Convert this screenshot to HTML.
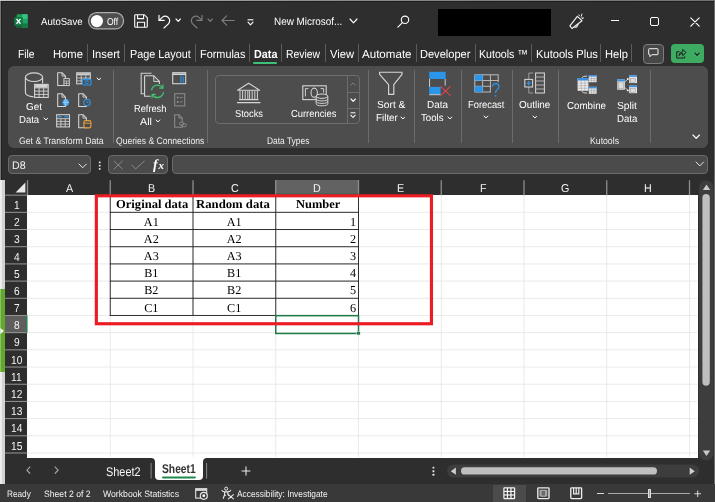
<!DOCTYPE html>
<html><head><meta charset="utf-8"><title>Excel</title>
<style>
html,body{margin:0;padding:0;background:#2e2e2e;}
body{width:715px;height:502px;overflow:hidden;position:relative;font-family:"Liberation Sans",sans-serif;}
#app{will-change:transform;position:absolute;left:0;top:0;width:715px;height:502px;overflow:hidden;background:#2e2e2e;}
.t{position:absolute;white-space:pre;transform-origin:0 0;display:block;text-rendering:geometricPrecision;}
.b{position:absolute;display:block;box-sizing:border-box;}
</style></head><body><div id="app">
<div class="b" style="left:0.00px;top:0.00px;width:715.00px;height:1.00px;background:linear-gradient(90deg,#c4c4c4 0%,#a0a0a0 25%,#8a8a8a 50%,#727272 100%);"></div>
<div class="b" style="left:0.00px;top:1.00px;width:715.00px;height:1.00px;background:#1e1e1e;"></div>
<div class="b" style="left:0.00px;top:1.00px;width:1.00px;height:179.00px;background:#777777;"></div>
<div class="b" style="left:1.00px;top:2.00px;width:1.00px;height:178.00px;background:#1e1e1e;"></div>
<svg class="b" style="left:13.60px;top:13.80px;" width="14" height="14.4" viewBox="0 0 14 14.4">
<rect x="2.6" y="0.2" width="11" height="14" rx="1.3" fill="#1f9d58"/>
<rect x="8.1" y="0.2" width="5.5" height="4.7" fill="#33c481"/>
<rect x="8.1" y="4.9" width="5.5" height="4.6" fill="#21a366"/>
<rect x="8.1" y="9.5" width="5.5" height="4.7" fill="#167a43"/>
<rect x="2.6" y="4.9" width="5.5" height="4.6" fill="#107c41"/>
<rect x="2.6" y="9.5" width="5.5" height="4.7" fill="#185c37"/>
<rect x="0.2" y="2.9" width="8.6" height="8.8" rx="1" fill="#0f7a41"/>
<path d="M2.5 4.9 L6.5 9.8 M6.5 4.9 L2.5 9.8" stroke="#fff" stroke-width="1.35"/>
</svg>
<span class="t" style="left:41.00px;top:18px;font-size:10.2px;line-height:10.2px;color:#fff;font-family:'Liberation Sans', sans-serif;font-weight:400;transform:scaleX(0.9405);">AutoSave</span>
<svg class="b" style="left:86px;top:11px" width="40" height="20" viewBox="0 0 40 20"><rect x="1.90" y="1.00" width="36.30" height="17.60" rx="8.8" fill="#adadad"/></svg>
<svg class="b" style="left:88px;top:12px" width="36" height="18" viewBox="0 0 36 18"><rect x="1.15" y="1.25" width="33.80" height="15.10" rx="7.55" fill="#4e4e4e"/></svg>
<svg class="b" style="left:90.00px;top:14.00px;" width="14" height="14" viewBox="0 0 14 14"><circle cx="6.9" cy="7.1" r="6.1" fill="#ffffff"/></svg>
<span class="t" style="left:106.90px;top:18px;font-size:10.0px;line-height:10.0px;color:#fff;font-family:'Liberation Sans', sans-serif;font-weight:400;transform:scaleX(0.8515);">Off</span>
<svg class="b" style="left:134.00px;top:14.00px;" width="14" height="14" viewBox="0 0 14 14"><path d="M1.6 0.7 H10.3 L13.3 3.7 V12.2 Q13.3 13.3 12.2 13.3 H1.8 Q0.7 13.3 0.7 12.2 V1.6 Q0.7 0.7 1.6 0.7 Z" fill="none" stroke="#fff" stroke-width="1.1"/>
<path d="M3.6 0.9 V4.6 H9.6 V0.9" fill="none" stroke="#fff" stroke-width="1.1"/>
<path d="M3.4 13.2 V8.2 H10.6 V13.2" fill="none" stroke="#fff" stroke-width="1.1"/></svg>
<svg class="b" style="left:157.50px;top:13.50px;" width="13" height="15" viewBox="0 0 13 15"><path d="M1 1.2 V6.4 H6.2" fill="none" stroke="#fff" stroke-width="1.15" stroke-linecap="round" stroke-linejoin="round"/>
<path d="M1.3 6.2 L4.2 3.4 Q7 1 10 3.2 Q13 6 10.6 9.6 L6 14" fill="none" stroke="#fff" stroke-width="1.15" stroke-linecap="round"/></svg>
<svg class="b" style="left:175.10px;top:18.25px;" width="6.4" height="4.3" viewBox="0 0 6.4 4.3"><path d="M1 1 L3.2 3.3 L5.4 1" fill="none" stroke="#fff" stroke-width="1.1" stroke-linecap="round" stroke-linejoin="round"/></svg>
<svg class="b" style="left:189.50px;top:13.50px;" width="13" height="15" viewBox="0 0 13 15"><g transform="translate(13,0) scale(-1,1)"><path d="M1 1.2 V6.4 H6.2" fill="none" stroke="#7d7d7d" stroke-width="1.15" stroke-linecap="round" stroke-linejoin="round"/>
<path d="M1.3 6.2 L4.2 3.4 Q7 1 10 3.2 Q13 6 10.6 9.6 L6 14" fill="none" stroke="#7d7d7d" stroke-width="1.15" stroke-linecap="round"/></g></svg>
<svg class="b" style="left:207.10px;top:18.25px;" width="6.4" height="4.3" viewBox="0 0 6.4 4.3"><path d="M1 1 L3.2 3.3 L5.4 1" fill="none" stroke="#7d7d7d" stroke-width="1.1" stroke-linecap="round" stroke-linejoin="round"/></svg>
<svg class="b" style="left:220.50px;top:15.00px;" width="14" height="11" viewBox="0 0 14 11"><path d="M13.3 5.5 H1 M5.6 0.9 L1 5.5 L5.6 10.1" fill="none" stroke="#7d7d7d" stroke-width="1.15" stroke-linecap="round" stroke-linejoin="round"/></svg>
<svg class="b" style="left:247.00px;top:18.50px;" width="7" height="7" viewBox="0 0 7 7"><path d="M0.6 0.8 H6.4" stroke="#fff" stroke-width="1.1"/><path d="M1 3.2 L3.5 5.8 L6 3.2" fill="none" stroke="#fff" stroke-width="1.1" stroke-linecap="round" stroke-linejoin="round"/></svg>
<span class="t" style="left:274.00px;top:17px;font-size:10.7px;line-height:10.7px;color:#fff;font-family:'Liberation Sans', sans-serif;font-weight:400;transform:scaleX(0.9278);">New Microsof...</span>
<svg class="b" style="left:348.50px;top:18.10px;" width="9" height="5.8" viewBox="0 0 9 5.8"><path d="M1 1 L4.5 4.8 L8 1" fill="none" stroke="#fff" stroke-width="1.15" stroke-linecap="round" stroke-linejoin="round"/></svg>
<svg class="b" style="left:396.50px;top:15.00px;" width="13" height="13" viewBox="0 0 13 13"><circle cx="8" cy="4.8" r="3.7" fill="none" stroke="#fff" stroke-width="1.1"/><path d="M5.4 7.6 L0.9 12.1" stroke="#fff" stroke-width="1.15" stroke-linecap="round"/></svg>
<div class="b" style="left:437.60px;top:9.00px;width:113.40px;height:27.40px;background:#000000;"></div>
<svg class="b" style="left:568.50px;top:12.50px;" width="16" height="17" viewBox="0 0 16 17"><path d="M0.9 12.9 L8.3 3.3 L13 7.7 L3 15.5 Z" fill="none" stroke="#f2f2f2" stroke-width="1.15" stroke-linejoin="round"/>
<path d="M5.4 13.8 Q7.8 15.6 9.2 11" fill="none" stroke="#f2f2f2" stroke-width="1.05"/>
<path d="M9.9 1.9 L10.5 2.9 M12.9 1 L12.3 3.2 M14.6 4.9 L13.3 5.5 M12.2 5.2 L13 4.4" stroke="#f2f2f2" stroke-width="0.95" stroke-linecap="round"/></svg>
<div class="b" style="left:611.00px;top:19.60px;width:8.00px;height:1.10px;background:#ffffff;"></div>
<div class="b" style="left:650.30px;top:17.20px;width:8.60px;height:8.40px;background:transparent;border:1.15px solid #fff;border-radius:2px;"></div>
<svg class="b" style="left:689.50px;top:16.50px;" width="10" height="10" viewBox="0 0 10 10"><path d="M0.8 0.8 L9.2 9.2 M9.2 0.8 L0.8 9.2" stroke="#fff" stroke-width="1.15" stroke-linecap="round"/></svg>
<span class="t" style="left:18.40px;top:49px;font-size:11.7px;line-height:11.7px;color:#fff;font-family:'Liberation Sans', sans-serif;font-weight:400;transform:scaleX(0.8805);">File</span>
<span class="t" style="left:53.00px;top:49px;font-size:11.7px;line-height:11.7px;color:#fff;font-family:'Liberation Sans', sans-serif;font-weight:400;transform:scaleX(0.9612);">Home</span>
<span class="t" style="left:92.00px;top:49px;font-size:11.7px;line-height:11.7px;color:#fff;font-family:'Liberation Sans', sans-serif;font-weight:400;transform:scaleX(0.9569);">Insert</span>
<span class="t" style="left:129.60px;top:49px;font-size:11.7px;line-height:11.7px;color:#fff;font-family:'Liberation Sans', sans-serif;font-weight:400;transform:scaleX(0.9253);">Page Layout</span>
<span class="t" style="left:199.60px;top:49px;font-size:11.7px;line-height:11.7px;color:#fff;font-family:'Liberation Sans', sans-serif;font-weight:400;transform:scaleX(0.9311);">Formulas</span>
<span class="t" style="left:286.40px;top:49px;font-size:11.7px;line-height:11.7px;color:#fff;font-family:'Liberation Sans', sans-serif;font-weight:400;transform:scaleX(0.8863);">Review</span>
<span class="t" style="left:329.60px;top:49px;font-size:11.7px;line-height:11.7px;color:#fff;font-family:'Liberation Sans', sans-serif;font-weight:400;transform:scaleX(0.9543);">View</span>
<span class="t" style="left:362.40px;top:49px;font-size:11.7px;line-height:11.7px;color:#fff;font-family:'Liberation Sans', sans-serif;font-weight:400;transform:scaleX(0.9904);">Automate</span>
<span class="t" style="left:420.00px;top:49px;font-size:11.7px;line-height:11.7px;color:#fff;font-family:'Liberation Sans', sans-serif;font-weight:400;transform:scaleX(0.9450);">Developer</span>
<span class="t" style="left:479.00px;top:49px;font-size:11.7px;line-height:11.7px;color:#fff;font-family:'Liberation Sans', sans-serif;font-weight:400;transform:scaleX(0.9078);">Kutools ™</span>
<span class="t" style="left:535.60px;top:49px;font-size:11.7px;line-height:11.7px;color:#fff;font-family:'Liberation Sans', sans-serif;font-weight:400;transform:scaleX(0.9533);">Kutools Plus</span>
<span class="t" style="left:604.60px;top:49px;font-size:11.7px;line-height:11.7px;color:#fff;font-family:'Liberation Sans', sans-serif;font-weight:400;transform:scaleX(0.9558);">Help</span>
<span class="t" style="left:253.60px;top:49px;font-size:11.7px;line-height:11.7px;color:#fff;font-family:'Liberation Sans', sans-serif;font-weight:700;transform:scaleX(0.9227);">Data</span>
<div class="b" style="left:253.00px;top:62.00px;width:24.40px;height:2.00px;background:#3fbf78;border-radius:1px;"></div>
<div class="b" style="left:86.90px;top:43.50px;width:1.00px;height:18.50px;background:#5c5c5c;"></div>
<div class="b" style="left:123.90px;top:43.50px;width:1.00px;height:18.50px;background:#5c5c5c;"></div>
<div class="b" style="left:194.50px;top:43.50px;width:1.00px;height:18.50px;background:#5c5c5c;"></div>
<div class="b" style="left:249.10px;top:43.50px;width:1.00px;height:18.50px;background:#5c5c5c;"></div>
<div class="b" style="left:280.50px;top:43.50px;width:1.00px;height:18.50px;background:#5c5c5c;"></div>
<div class="b" style="left:325.10px;top:43.50px;width:1.00px;height:18.50px;background:#5c5c5c;"></div>
<div class="b" style="left:357.50px;top:43.50px;width:1.00px;height:18.50px;background:#5c5c5c;"></div>
<div class="b" style="left:415.50px;top:43.50px;width:1.00px;height:18.50px;background:#5c5c5c;"></div>
<div class="b" style="left:474.50px;top:43.50px;width:1.00px;height:18.50px;background:#5c5c5c;"></div>
<div class="b" style="left:531.10px;top:43.50px;width:1.00px;height:18.50px;background:#5c5c5c;"></div>
<div class="b" style="left:600.10px;top:43.50px;width:1.00px;height:18.50px;background:#5c5c5c;"></div>
<div class="b" style="left:631.10px;top:43.50px;width:1.00px;height:18.50px;background:#5c5c5c;"></div>
<div class="b" style="left:643.00px;top:43.60px;width:21.00px;height:20.00px;background:#474747;border:1px solid #7c7c7c;border-radius:4px;"></div>
<svg class="b" style="left:647.60px;top:48.40px;" width="11" height="10" viewBox="0 0 11 10"><path d="M1.3 0.7 H9.4 Q10 0.7 10 1.3 V6.1 Q10 6.7 9.4 6.7 H3.8 L2 8.7 V6.7 H1.3 Q0.7 6.7 0.7 6.1 V1.3 Q0.7 0.7 1.3 0.7 Z" fill="none" stroke="#f4f4f4" stroke-width="1"/></svg>
<div class="b" style="left:670.80px;top:43.60px;width:33.70px;height:19.60px;background:#3eab62;border-radius:4px;"></div>
<svg class="b" style="left:676.40px;top:47.80px;" width="11.4" height="11" viewBox="0 0 11.4 11"><path d="M3.4 3.8 H1.4 Q0.7 3.8 0.7 4.5 V9.3 Q0.7 10 1.4 10 H8 Q8.7 10 8.7 9.3 V8.4" fill="none" stroke="#1d1d1d" stroke-width="1.05"/>
<path d="M2.9 7.6 Q3.3 4.1 6.8 3.7 V1.4 L10 4.6 L6.8 7.6 V5.5 Q4.4 5.5 2.9 7.6 Z" fill="none" stroke="#1d1d1d" stroke-width="1" stroke-linejoin="round"/></svg>
<svg class="b" style="left:694.40px;top:51.65px;" width="6.2" height="4.3" viewBox="0 0 6.2 4.3"><path d="M1 1 L3.1 3.3 L5.2 1" fill="none" stroke="#1d1d1d" stroke-width="1.1" stroke-linecap="round" stroke-linejoin="round"/></svg>
<div class="b" style="left:7.60px;top:66.00px;width:700.40px;height:82.00px;background:#4d4d4d;border-radius:6px;"></div>
<div class="b" style="left:113.10px;top:70.00px;width:1.00px;height:73.00px;background:#6b6b6b;"></div>
<div class="b" style="left:206.90px;top:70.00px;width:1.00px;height:73.00px;background:#6b6b6b;"></div>
<div class="b" style="left:368.10px;top:70.00px;width:1.00px;height:73.00px;background:#6b6b6b;"></div>
<div class="b" style="left:413.90px;top:70.00px;width:1.00px;height:73.00px;background:#6b6b6b;"></div>
<div class="b" style="left:460.50px;top:70.00px;width:1.00px;height:73.00px;background:#6b6b6b;"></div>
<div class="b" style="left:511.90px;top:70.00px;width:1.00px;height:73.00px;background:#6b6b6b;"></div>
<div class="b" style="left:558.10px;top:70.00px;width:1.00px;height:73.00px;background:#6b6b6b;"></div>
<div class="b" style="left:649.90px;top:70.00px;width:1.00px;height:73.00px;background:#6b6b6b;"></div>
<span class="t" style="left:19.40px;top:137px;font-size:9.6px;line-height:9.6px;color:#f0f0f0;font-family:'Liberation Sans', sans-serif;font-weight:400;transform:scaleX(0.9061);">Get &amp; Transform Data</span>
<span class="t" style="left:116.00px;top:137px;font-size:9.6px;line-height:9.6px;color:#f0f0f0;font-family:'Liberation Sans', sans-serif;font-weight:400;transform:scaleX(0.8955);">Queries &amp; Connections</span>
<span class="t" style="left:266.60px;top:137px;font-size:9.6px;line-height:9.6px;color:#f0f0f0;font-family:'Liberation Sans', sans-serif;font-weight:400;transform:scaleX(0.8763);">Data Types</span>
<span class="t" style="left:590.00px;top:137px;font-size:9.6px;line-height:9.6px;color:#f0f0f0;font-family:'Liberation Sans', sans-serif;font-weight:400;transform:scaleX(0.9056);">Kutools</span>
<span class="t" style="left:26.00px;top:103px;font-size:10.2px;line-height:10.2px;color:#fff;font-family:'Liberation Sans', sans-serif;font-weight:400;transform:scaleX(0.9732);">Get</span>
<span class="t" style="left:19.40px;top:116px;font-size:10.2px;line-height:10.2px;color:#fff;font-family:'Liberation Sans', sans-serif;font-weight:400;transform:scaleX(0.9375);">Data</span>
<svg class="b" style="left:42.50px;top:117.30px;" width="5.8" height="4.0" viewBox="0 0 5.8 4.0"><path d="M1 1 L2.9 3.0 L4.8 1" fill="none" stroke="#fff" stroke-width="1.0" stroke-linecap="round" stroke-linejoin="round"/></svg>
<span class="t" style="left:133.60px;top:105px;font-size:10.2px;line-height:10.2px;color:#fff;font-family:'Liberation Sans', sans-serif;font-weight:400;transform:scaleX(0.9072);">Refresh</span>
<span class="t" style="left:139.60px;top:118px;font-size:10.2px;line-height:10.2px;color:#fff;font-family:'Liberation Sans', sans-serif;font-weight:400;transform:scaleX(1.0497);">All</span>
<svg class="b" style="left:155.10px;top:118.60px;" width="5.8" height="4.0" viewBox="0 0 5.8 4.0"><path d="M1 1 L2.9 3.0 L4.8 1" fill="none" stroke="#fff" stroke-width="1.0" stroke-linecap="round" stroke-linejoin="round"/></svg>
<span class="t" style="left:235.00px;top:110px;font-size:10.2px;line-height:10.2px;color:#fff;font-family:'Liberation Sans', sans-serif;font-weight:400;transform:scaleX(0.9147);">Stocks</span>
<span class="t" style="left:291.00px;top:110px;font-size:10.2px;line-height:10.2px;color:#fff;font-family:'Liberation Sans', sans-serif;font-weight:400;transform:scaleX(0.9205);">Currencies</span>
<span class="t" style="left:376.60px;top:101px;font-size:10.2px;line-height:10.2px;color:#fff;font-family:'Liberation Sans', sans-serif;font-weight:400;transform:scaleX(1.0019);">Sort &amp;</span>
<span class="t" style="left:375.60px;top:114px;font-size:10.2px;line-height:10.2px;color:#fff;font-family:'Liberation Sans', sans-serif;font-weight:400;transform:scaleX(0.9662);">Filter</span>
<svg class="b" style="left:399.60px;top:115.80px;" width="5.8" height="4.0" viewBox="0 0 5.8 4.0"><path d="M1 1 L2.9 3.0 L4.8 1" fill="none" stroke="#fff" stroke-width="1.0" stroke-linecap="round" stroke-linejoin="round"/></svg>
<span class="t" style="left:427.00px;top:101px;font-size:10.2px;line-height:10.2px;color:#fff;font-family:'Liberation Sans', sans-serif;font-weight:400;transform:scaleX(0.9747);">Data</span>
<span class="t" style="left:421.00px;top:114px;font-size:10.2px;line-height:10.2px;color:#fff;font-family:'Liberation Sans', sans-serif;font-weight:400;transform:scaleX(0.9449);">Tools</span>
<svg class="b" style="left:446.90px;top:115.80px;" width="5.8" height="4.0" viewBox="0 0 5.8 4.0"><path d="M1 1 L2.9 3.0 L4.8 1" fill="none" stroke="#fff" stroke-width="1.0" stroke-linecap="round" stroke-linejoin="round"/></svg>
<span class="t" style="left:468.00px;top:101px;font-size:10.2px;line-height:10.2px;color:#fff;font-family:'Liberation Sans', sans-serif;font-weight:400;transform:scaleX(0.9173);">Forecast</span>
<svg class="b" style="left:483.10px;top:115.20px;" width="5.8" height="4.0" viewBox="0 0 5.8 4.0"><path d="M1 1 L2.9 3.0 L4.8 1" fill="none" stroke="#fff" stroke-width="1.0" stroke-linecap="round" stroke-linejoin="round"/></svg>
<span class="t" style="left:519.00px;top:101px;font-size:10.2px;line-height:10.2px;color:#fff;font-family:'Liberation Sans', sans-serif;font-weight:400;transform:scaleX(0.9716);">Outline</span>
<svg class="b" style="left:531.50px;top:115.20px;" width="5.8" height="4.0" viewBox="0 0 5.8 4.0"><path d="M1 1 L2.9 3.0 L4.8 1" fill="none" stroke="#fff" stroke-width="1.0" stroke-linecap="round" stroke-linejoin="round"/></svg>
<span class="t" style="left:567.00px;top:102px;font-size:10.2px;line-height:10.2px;color:#fff;font-family:'Liberation Sans', sans-serif;font-weight:400;transform:scaleX(0.9554);">Combine</span>
<span class="t" style="left:617.00px;top:102px;font-size:10.2px;line-height:10.2px;color:#fff;font-family:'Liberation Sans', sans-serif;font-weight:400;transform:scaleX(1.0079);">Split</span>
<span class="t" style="left:616.60px;top:115px;font-size:10.2px;line-height:10.2px;color:#fff;font-family:'Liberation Sans', sans-serif;font-weight:400;transform:scaleX(0.9468);">Data</span>
<svg class="b" style="left:691.80px;top:134.30px;" width="8.4" height="5.4" viewBox="0 0 8.4 5.4"><path d="M1 1 L4.2 4.4 L7.4 1" fill="none" stroke="#fff" stroke-width="1.15" stroke-linecap="round" stroke-linejoin="round"/></svg>
<div class="b" style="left:215.00px;top:75.00px;width:144.60px;height:49.40px;background:transparent;border:1px solid #6d6d6d;border-radius:4px;"></div>
<div class="b" style="left:347.00px;top:75.50px;width:1.00px;height:48.50px;background:#6d6d6d;"></div>
<div class="b" style="left:347.50px;top:91.60px;width:11.90px;height:1.00px;background:#6d6d6d;"></div>
<div class="b" style="left:347.50px;top:107.60px;width:11.90px;height:1.00px;background:#6d6d6d;"></div>
<svg class="b" style="left:350.20px;top:81.50px;" width="6" height="4" viewBox="0 0 6 4"><path d="M0.7 3.2 L3 0.9 L5.3 3.2" fill="none" stroke="#7f7f7f" stroke-width="1" stroke-linecap="round" stroke-linejoin="round"/></svg>
<svg class="b" style="left:350.00px;top:98.45px;" width="6.4" height="4.3" viewBox="0 0 6.4 4.3"><path d="M1 1 L3.2 3.3 L5.4 1" fill="none" stroke="#fff" stroke-width="1.1" stroke-linecap="round" stroke-linejoin="round"/></svg>
<svg class="b" style="left:350.20px;top:111.50px;" width="6" height="7" viewBox="0 0 6 7"><path d="M0.6 0.8 H5.4" stroke="#fff" stroke-width="1"/><path d="M0.8 3.2 L3 5.5 L5.2 3.2" fill="none" stroke="#fff" stroke-width="1.05" stroke-linecap="round" stroke-linejoin="round"/></svg>
<svg class="b" style="left:24.00px;top:71.00px;" width="26" height="28" viewBox="0 0 26 28">
<ellipse cx="10" cy="6.2" rx="8.6" ry="4.3" fill="none" stroke="#d6d6d6" stroke-width="1.1"/>
<path d="M1.4 6.2 V21.5 Q1.4 25 9.6 25.9 M18.6 6.2 V12.6" fill="none" stroke="#d6d6d6" stroke-width="1.1"/>
<rect x="10.6" y="13.4" width="13.6" height="13" fill="#4d4d4d" stroke="#d6d6d6" stroke-width="1.1"/>
<rect x="11.2" y="14" width="12.4" height="2.6" fill="#d4d4d4"/>
<path d="M10.6 20.1 H24.2 M10.6 23.4 H24.2 M15.1 16.6 V26.4 M19.7 16.6 V26.4" stroke="#d6d6d6" stroke-width="0.9"/>
<path d="M10.6 16.9 H24.2" stroke="#d6d6d6" stroke-width="0.9"/>
</svg>
<svg class="b" style="left:57.40px;top:72.00px;" width="16" height="16" viewBox="0 0 16 16"><path d="M0.7 0.7 H5.00 L8.40 4.10 V13.40 H0.7 Z" fill="none" stroke="#d6d6d6" stroke-width="1.05" stroke-linejoin="round"/>
<path d="M5.00 0.7 V4.1 H8.40" fill="none" stroke="#d6d6d6" stroke-width="0.9"/><rect x="6.9" y="6.6" width="5.4" height="7" fill="#4d4d4d" stroke="#d6d6d6" stroke-width="0.9"/><path d="M6.9 9 H12.3 M6.9 11.3 H12.3 M9.6 9 V13.6" stroke="#d6d6d6" stroke-width="0.7"/></svg>
<svg class="b" style="left:76.20px;top:72.40px;" width="16" height="14" viewBox="0 0 16 14"><rect x="0.7" y="0.8" width="13.6" height="11" fill="none" stroke="#d6d6d6" stroke-width="1.05"/>
<rect x="1.1" y="1.2" width="12.8" height="2.2" fill="#cfcfcf"/>
<path d="M0.7 6 H14.3 M0.7 8.9 H14.3 M5.2 3.4 V11.8 M9.8 3.4 V11.8" stroke="#d6d6d6" stroke-width="0.85"/>
<rect x="6.4" y="7.6" width="8.6" height="5.4" rx="0.9" fill="#4d4d4d" stroke="#2b95ea" stroke-width="1.15"/>
<circle cx="10.7" cy="10.3" r="1.55" fill="none" stroke="#2b95ea" stroke-width="1"/>
<path d="M9.2 7.6 L9.8 6.6 H11.6 L12.2 7.6" fill="none" stroke="#2b95ea" stroke-width="0.9"/></svg>
<svg class="b" style="left:95.50px;top:77.20px;" width="5.8" height="4.0" viewBox="0 0 5.8 4.0"><path d="M1 1 L2.9 3.0 L4.8 1" fill="none" stroke="#fff" stroke-width="1.0" stroke-linecap="round" stroke-linejoin="round"/></svg>
<svg class="b" style="left:57.40px;top:92.80px;" width="16" height="16" viewBox="0 0 16 16"><path d="M0.7 0.7 H5.00 L8.40 4.10 V13.40 H0.7 Z" fill="none" stroke="#d6d6d6" stroke-width="1.05" stroke-linejoin="round"/>
<path d="M5.00 0.7 V4.1 H8.40" fill="none" stroke="#d6d6d6" stroke-width="0.9"/><circle cx="8.8" cy="9.4" r="3.4" fill="#2b95ea"/><path d="M8.8 6.2 V12.6 M5.6 9.4 H12 " stroke="#cfe4f7" stroke-width="0.55"/><ellipse cx="8.8" cy="9.4" rx="1.5" ry="3.1" fill="none" stroke="#cfe4f7" stroke-width="0.5"/></svg>
<svg class="b" style="left:78.20px;top:92.80px;" width="16" height="16" viewBox="0 0 16 16"><path d="M0.7 0.7 H5.00 L8.40 4.10 V13.40 H0.7 Z" fill="none" stroke="#d6d6d6" stroke-width="1.05" stroke-linejoin="round"/>
<path d="M5.00 0.7 V4.1 H8.40" fill="none" stroke="#d6d6d6" stroke-width="0.9"/><circle cx="9" cy="9.4" r="3.2" fill="#4d4d4d" stroke="#2b95ea" stroke-width="1.1"/><path d="M9 7.5 V9.5 H10.7" fill="none" stroke="#2b95ea" stroke-width="0.95"/></svg>
<svg class="b" style="left:55.60px;top:113.60px;" width="15" height="14" viewBox="0 0 15 14"><rect x="0.7" y="0.7" width="12.8" height="12.2" fill="none" stroke="#d6d6d6" stroke-width="1.05"/>
<path d="M0.7 4.7 H13.5 M0.7 7.4 H13.5 M0.7 10.1 H13.5 M4.9 4.7 V12.9 M9.2 4.7 V12.9" stroke="#d6d6d6" stroke-width="0.85"/>
<path d="M2.6 2.7 H5.8 M8.4 2.7 H11.6" stroke="#2b95ea" stroke-width="1.3"/><path d="M3.4 1.5 L2.2 2.7 L3.4 3.9 M10.8 1.5 L12 2.7 L10.8 3.9" fill="none" stroke="#2b95ea" stroke-width="0.8"/></svg>
<svg class="b" style="left:78.20px;top:113.60px;" width="16" height="16" viewBox="0 0 16 16"><path d="M0.7 0.7 H5.00 L8.40 4.10 V13.80 H0.7 Z" fill="none" stroke="#d6d6d6" stroke-width="1.05" stroke-linejoin="round"/>
<path d="M5.00 0.7 V4.1 H8.40" fill="none" stroke="#d6d6d6" stroke-width="0.9"/><rect x="5.9" y="6.6" width="7" height="7.2" rx="1.6" fill="#4d4d4d" stroke="#e5a03c" stroke-width="1.15"/><path d="M5.9 9.2 H12.9" stroke="#e5a03c" stroke-width="0.95"/></svg>
<svg class="b" style="left:140.00px;top:72.00px;" width="24" height="27" viewBox="0 0 24 27"><path d="M4 21.8 H1.2 V1.2 H11.6" fill="none" stroke="#cfcfcf" stroke-width="1.1"/>
<path d="M4.6 3.8 H13.8 L19.4 9.4 V12 M4.6 3.8 V24.2 H10.6" fill="none" stroke="#d6d6d6" stroke-width="1.1" stroke-linejoin="round"/>
<path d="M13.8 3.8 V9.4 H19.4" fill="none" stroke="#d6d6d6" stroke-width="1"/>
<path d="M11.6 18.4 A6 6 0 0 1 22.4 15.6" fill="none" stroke="#3fc36f" stroke-width="1.35"/>
<path d="M23.4 20.2 A6 6 0 0 1 12.6 23" fill="none" stroke="#3fc36f" stroke-width="1.35"/>
<path d="M22.9 12.4 V16.2 H19.2" fill="none" stroke="#3fc36f" stroke-width="1.25" stroke-linejoin="round"/>
<path d="M12.1 26.2 V22.4 H15.8" fill="none" stroke="#3fc36f" stroke-width="1.25" stroke-linejoin="round"/></svg>
<svg class="b" style="left:172.20px;top:72.40px;" width="15" height="13" viewBox="0 0 15 13"><rect x="0.7" y="0.7" width="13" height="11" fill="none" stroke="#d6d6d6" stroke-width="1.1"/><path d="M0.7 2.2 H13.7" stroke="#d6d6d6" stroke-width="1.6"/>
<path d="M8.9 3 V11.4 M11.2 4.2 V10.6" stroke="#2b95ea" stroke-width="1.15"/></svg>
<svg class="b" style="left:173.60px;top:93.00px;" width="12" height="14" viewBox="0 0 12 14"><rect x="0.7" y="0.7" width="10" height="12.2" fill="none" stroke="#8c8c8c" stroke-width="1.05"/>
<rect x="2.8" y="3.6" width="1.8" height="1.8" fill="#8c8c8c"/><rect x="2.8" y="8" width="1.8" height="1.8" fill="#8c8c8c"/><path d="M5.8 4.5 H8.6 M5.8 8.9 H8.6" stroke="#8c8c8c" stroke-width="0.9"/></svg>
<svg class="b" style="left:174.00px;top:114.20px;" width="16" height="16" viewBox="0 0 16 16"><path d="M0.7 0.7 H4.80 L8.20 4.10 V13.20 H0.7 Z" fill="none" stroke="#8c8c8c" stroke-width="1.05" stroke-linejoin="round"/>
<path d="M4.80 0.7 V4.1 H8.20" fill="none" stroke="#8c8c8c" stroke-width="0.9"/><rect x="5.4" y="8.2" width="4.4" height="3" rx="1.5" fill="#4d4d4d" stroke="#8c8c8c" stroke-width="0.9"/><rect x="7.8" y="9.8" width="4.6" height="3" rx="1.5" fill="none" stroke="#8c8c8c" stroke-width="0.9"/></svg>
<svg class="b" style="left:236.00px;top:82.00px;" width="26" height="23" viewBox="0 0 26 23"><path d="M1.6 8.2 L12.6 1.2 L23.6 8.2 Z" fill="none" stroke="#d6d6d6" stroke-width="1.1" stroke-linejoin="round"/>
<path d="M4 9 V17.4 M6.6 9 V17.4 M9.2 9 V17.4 M11.8 9 V17.4 M13.6 9 V17.4 M16.2 9 V17.4 M18.8 9 V17.4 M21.4 9 V17.4" stroke="#d6d6d6" stroke-width="0.95"/>
<path d="M3 17.6 H22.4 M1 20.6 H24.4" stroke="#d6d6d6" stroke-width="1.15"/></svg>
<svg class="b" style="left:301.50px;top:85.00px;" width="27" height="22" viewBox="0 0 27 22"><rect x="0.8" y="0.8" width="23.4" height="13.8" fill="none" stroke="#d6d6d6" stroke-width="1.1"/>
<path d="M3.4 11.4 V3.6 H6.4 M18.6 3.6 H21.6 V7.6" fill="none" stroke="#d6d6d6" stroke-width="0.95"/>
<ellipse cx="12.2" cy="7.7" rx="3.2" ry="4.6" fill="none" stroke="#d6d6d6" stroke-width="1.05"/>
<path d="M14.2 11 V18.6 Q14.2 21 20 21 Q25.8 21 25.8 18.6 V11 Z" fill="#4d4d4d"/>
<ellipse cx="20" cy="11.2" rx="5.8" ry="2.2" fill="#4d4d4d" stroke="#d6d6d6" stroke-width="1"/>
<path d="M14.2 11.2 V18.6 Q14.2 20.8 20 20.8 Q25.8 20.8 25.8 18.6 V11.2 M14.2 13.7 Q14.2 15.9 20 15.9 Q25.8 15.9 25.8 13.7 M14.2 16.2 Q14.2 18.4 20 18.4 Q25.8 18.4 25.8 16.2" fill="none" stroke="#d6d6d6" stroke-width="0.95"/></svg>
<svg class="b" style="left:378.00px;top:71.00px;" width="26" height="25" viewBox="0 0 26 25"><path d="M1.6 1.2 H24 V3.4 L15.8 13.6 V23.4 H10.6 V13.6 L1.6 3.4 Z" fill="none" stroke="#d6d6d6" stroke-width="1.15" stroke-linejoin="round"/></svg>
<svg class="b" style="left:428.00px;top:71.00px;" width="24" height="26" viewBox="0 0 24 26"><rect x="1.2" y="0.8" width="16.4" height="7.2" fill="#2b95ea"/>
<path d="M1.6 8 V16 M17.2 8 V14.6" stroke="#d6d6d6" stroke-width="0.95"/>
<rect x="1.2" y="15.9" width="11.4" height="7.5" fill="#2b95ea"/><path d="M1.2 23.7 H12.6" stroke="#e6e6e6" stroke-width="0.8"/>
<path d="M12.6 15.4 L22.4 24.6 M22.4 15.4 L12.6 24.6" stroke="#e5404d" stroke-width="1.15"/></svg>
<svg class="b" style="left:474.00px;top:73.50px;" width="27" height="24" viewBox="0 0 27 24"><rect x="0.8" y="0.8" width="23.4" height="17.2" fill="none" stroke="#bdbdbd" stroke-width="1"/>
<path d="M0.8 6.5 H24.2 M0.8 12.3 H24.2 M8.6 0.8 V18 M16.4 0.8 V18" stroke="#bdbdbd" stroke-width="0.95"/>
<rect x="0.8" y="0.8" width="7.8" height="5.7" fill="#2b95ea"/><rect x="0.8" y="12.3" width="7.8" height="5.7" fill="#2b95ea"/>
<rect x="17" y="8.2" width="10" height="16" fill="#4d4d4d"/>
<path d="M18.4 12.8 Q18.6 9.6 21.8 9.6 Q25 9.8 25 12.6 Q25 14.4 23 15.8 Q21.6 16.8 21.6 19" fill="none" stroke="#2b95ea" stroke-width="1.25"/>
<circle cx="21.6" cy="21.8" r="0.9" fill="#2b95ea"/></svg>
<svg class="b" style="left:524.00px;top:71.50px;" width="22" height="23" viewBox="0 0 22 23"><rect x="11.6" y="1" width="8.8" height="20" fill="none" stroke="#d6d6d6" stroke-width="1.05"/>
<path d="M11.6 5 H20.4 M11.6 9 H20.4 M11.6 13 H20.4 M11.6 17 H20.4" stroke="#bdbdbd" stroke-width="0.9"/>
<path d="M9.2 1 H4.8 V21 H9.2" fill="none" stroke="#9a9a9a" stroke-width="1"/>
<rect x="0.8" y="7.4" width="7.8" height="7.6" fill="#4d4d4d" stroke="#d6d6d6" stroke-width="1.05"/>
<path d="M4.7 9 V13.4 M2.5 11.2 H6.9" stroke="#2b95ea" stroke-width="1.3"/></svg>
<svg class="b" style="left:576.00px;top:73.00px;" width="24" height="23" viewBox="0 0 24 23"><rect x="1.6" y="5" width="10.8" height="12.8" fill="#ececec"/><rect x="1.6" y="5" width="10.8" height="2.56" fill="#3a8fe0"/><path d="M1.6 10.12 H12.4" stroke="#9c9c9c" stroke-width="0.55"/><path d="M1.6 12.68 H12.4" stroke="#9c9c9c" stroke-width="0.55"/><path d="M1.6 15.24 H12.4" stroke="#9c9c9c" stroke-width="0.55"/><path d="M5.20 7.56 V17.8" stroke="#9c9c9c" stroke-width="0.55"/><path d="M8.80 7.56 V17.8" stroke="#9c9c9c" stroke-width="0.55"/><rect x="12.8" y="2" width="7.8" height="7.2" fill="#ececec"/><rect x="12.8" y="2" width="7.8" height="1.60" fill="#3a8fe0"/><path d="M12.8 5.47 H20.6" stroke="#9c9c9c" stroke-width="0.55"/><path d="M12.8 7.33 H20.6" stroke="#9c9c9c" stroke-width="0.55"/><path d="M15.40 3.60 V9.2" stroke="#9c9c9c" stroke-width="0.55"/><path d="M18.00 3.60 V9.2" stroke="#9c9c9c" stroke-width="0.55"/><rect x="12.8" y="13.8" width="7.8" height="7" fill="#ececec"/><rect x="12.8" y="13.8" width="7.8" height="1.60" fill="#3a8fe0"/><path d="M12.8 17.20 H20.6" stroke="#9c9c9c" stroke-width="0.55"/><path d="M12.8 19.00 H20.6" stroke="#9c9c9c" stroke-width="0.55"/><path d="M15.40 15.40 V20.8" stroke="#9c9c9c" stroke-width="0.55"/><path d="M18.00 15.40 V20.8" stroke="#9c9c9c" stroke-width="0.55"/><path d="M11 3.2 Q6.4 3 6 5 M11 20 Q6.4 20.2 6 18.2" fill="none" stroke="#d8d8d8" stroke-width="1"/></svg>
<svg class="b" style="left:616.00px;top:73.00px;" width="24" height="23" viewBox="0 0 24 23"><rect x="1.3" y="6.3" width="7.5" height="10.4" fill="#ececec"/><rect x="1.3" y="6.3" width="7.5" height="2.08" fill="#3a8fe0"/><rect x="13.2" y="2.3" width="7.8" height="7.8" fill="#ececec"/><rect x="13.2" y="2.3" width="7.8" height="1.60" fill="#3a8fe0"/><rect x="13.2" y="12.6" width="7.8" height="7.6" fill="#ececec"/><rect x="13.2" y="12.6" width="7.8" height="1.60" fill="#3a8fe0"/><rect x="2.4" y="9" width="5.2" height="6.8" fill="#dcdcdc" stroke="#8f8f8f" stroke-width="0.5"/><rect x="14.6" y="5.2" width="5" height="4" fill="#dcdcdc" stroke="#8f8f8f" stroke-width="0.5"/><rect x="14.6" y="15.4" width="5" height="4" fill="#dcdcdc" stroke="#8f8f8f" stroke-width="0.5"/><path d="M8.8 9 L11.4 6.4 M8.8 14.4 L11.4 17" stroke="#d8d8d8" stroke-width="0.9"/><circle cx="11.8" cy="6" r="0.9" fill="#fff"/><circle cx="11.8" cy="17.4" r="0.9" fill="#fff"/></svg>
<div class="b" style="left:8.00px;top:155.00px;width:83.20px;height:19.40px;background:#4b4b4b;border:1px solid #6a6a6a;border-radius:4px;"></div>
<span class="t" style="left:12.40px;top:161px;font-size:11.0px;line-height:11.0px;color:#f4f4f4;font-family:'Liberation Sans', sans-serif;font-weight:400;transform:scaleX(0.9671);">D8</span>
<svg class="b" style="left:78.00px;top:162.90px;" width="9.4" height="5.8" viewBox="0 0 9.4 5.8"><path d="M1 1 L4.7 4.8 L8.4 1" fill="none" stroke="#f0f0f0" stroke-width="0.95" stroke-linecap="round" stroke-linejoin="round"/></svg>
<svg class="b" style="left:97px;top:160px" width="5" height="5" viewBox="0 0 5 5"><rect x="1.80" y="1.40" width="1.80" height="1.80" rx="0.5" fill="#e4e4e4"/></svg>
<svg class="b" style="left:97px;top:163px" width="5" height="5" viewBox="0 0 5 5"><rect x="1.80" y="1.70" width="1.80" height="1.80" rx="0.5" fill="#e4e4e4"/></svg>
<svg class="b" style="left:97px;top:167px" width="5" height="4" viewBox="0 0 5 4"><rect x="1.80" y="1.00" width="1.80" height="1.80" rx="0.5" fill="#e4e4e4"/></svg>
<div class="b" style="left:108.40px;top:155.00px;width:59.80px;height:19.40px;background:#4b4b4b;border:1px solid #6a6a6a;border-radius:4px;"></div>
<svg class="b" style="left:113.00px;top:160.00px;" width="11" height="10" viewBox="0 0 11 10"><path d="M0.8 0.8 L9.6 9.2 M9.6 0.8 L0.8 9.2" stroke="#8a8a8a" stroke-width="1"/></svg>
<svg class="b" style="left:131.00px;top:160.00px;" width="15" height="10" viewBox="0 0 15 10"><path d="M0.8 5 L4.6 9 L13.6 0.8" fill="none" stroke="#8a8a8a" stroke-width="1"/></svg>
<span class="t" style="left:153.00px;top:159px;font-size:14px;line-height:14px;color:#fff;font-family:'Liberation Serif', serif;font-weight:700;transform:scaleX(1.0000);font-style:italic;">f</span>
<span class="t" style="left:158.60px;top:161px;font-size:11px;line-height:11px;color:#fff;font-family:'Liberation Serif', serif;font-weight:700;transform:scaleX(1.0000);font-style:italic;">x</span>
<div class="b" style="left:172.40px;top:155.00px;width:535.60px;height:19.40px;background:#4b4b4b;border:1px solid #6a6a6a;border-radius:4px;"></div>
<svg class="b" style="left:695.20px;top:161.45px;" width="9.6" height="5.9" viewBox="0 0 9.6 5.9"><path d="M1 1 L4.8 4.9 L8.6 1" fill="none" stroke="#f0f0f0" stroke-width="0.95" stroke-linecap="round" stroke-linejoin="round"/></svg>
<div class="b" style="left:0.00px;top:180.00px;width:5.00px;height:304.00px;background:#d2d2d2;"></div>
<div class="b" style="left:0.00px;top:180.00px;width:2.00px;height:304.00px;background:#ececec;"></div>
<div class="b" style="left:0.00px;top:289.00px;width:5.00px;height:83.00px;background:#63a632;"></div>
<div class="b" style="left:0.00px;top:289.00px;width:1.00px;height:83.00px;background:#8cc45a;"></div>
<svg class="b" style="left:0.00px;top:327.00px;" width="5" height="8" viewBox="0 0 5 8"><path d="M0.4 1 L3.8 4 L0.4 7 Z" fill="#fff"/></svg>
<div class="b" style="left:27.00px;top:195.00px;width:671.00px;height:263.00px;background:#ffffff;"></div>
<div class="b" style="left:5.00px;top:180.00px;width:693.00px;height:15.00px;background:#2e2e2e;"></div>
<div class="b" style="left:5.00px;top:195.00px;width:22.00px;height:263.00px;background:#2e2e2e;"></div>
<div class="b" style="left:275.00px;top:180.00px;width:84.00px;height:15.00px;background:#626262;"></div>
<div class="b" style="left:5.00px;top:316.00px;width:22.00px;height:17.00px;background:#5e5e5e;"></div>
<svg class="b" style="left:0;top:0" width="715" height="502" viewBox="0 0 715 502" fill="none"><path d="M110.25 195.00 L110.25 457.00" stroke="#e4e4e4" stroke-width="0.8"/><path d="M193.00 195.00 L193.00 457.00" stroke="#e4e4e4" stroke-width="0.8"/><path d="M275.75 195.00 L275.75 457.00" stroke="#e4e4e4" stroke-width="0.8"/><path d="M358.50 195.00 L358.50 457.00" stroke="#e4e4e4" stroke-width="0.8"/><path d="M441.25 195.00 L441.25 457.00" stroke="#e4e4e4" stroke-width="0.8"/><path d="M524.00 195.00 L524.00 457.00" stroke="#e4e4e4" stroke-width="0.8"/><path d="M606.75 195.00 L606.75 457.00" stroke="#e4e4e4" stroke-width="0.8"/><path d="M689.50 195.00 L689.50 457.00" stroke="#e4e4e4" stroke-width="0.8"/><path d="M27.40 212.34 L697.40 212.34" stroke="#e4e4e4" stroke-width="0.8"/><path d="M27.40 229.53 L697.40 229.53" stroke="#e4e4e4" stroke-width="0.8"/><path d="M27.40 246.72 L697.40 246.72" stroke="#e4e4e4" stroke-width="0.8"/><path d="M27.40 263.91 L697.40 263.91" stroke="#e4e4e4" stroke-width="0.8"/><path d="M27.40 281.10 L697.40 281.10" stroke="#e4e4e4" stroke-width="0.8"/><path d="M27.40 298.29 L697.40 298.29" stroke="#e4e4e4" stroke-width="0.8"/><path d="M27.40 315.48 L697.40 315.48" stroke="#e4e4e4" stroke-width="0.8"/><path d="M27.40 332.67 L697.40 332.67" stroke="#e4e4e4" stroke-width="0.8"/><path d="M27.40 349.86 L697.40 349.86" stroke="#e4e4e4" stroke-width="0.8"/><path d="M27.40 367.05 L697.40 367.05" stroke="#e4e4e4" stroke-width="0.8"/><path d="M27.40 384.24 L697.40 384.24" stroke="#e4e4e4" stroke-width="0.8"/><path d="M27.40 401.43 L697.40 401.43" stroke="#e4e4e4" stroke-width="0.8"/><path d="M27.40 418.62 L697.40 418.62" stroke="#e4e4e4" stroke-width="0.8"/><path d="M27.40 435.81 L697.40 435.81" stroke="#e4e4e4" stroke-width="0.8"/><path d="M27.40 453.00 L697.40 453.00" stroke="#e4e4e4" stroke-width="0.8"/><path d="M27.50 180.20 L27.50 195.20" stroke="#8e8e8e" stroke-width="1.3"/><path d="M110.25 180.20 L110.25 195.20" stroke="#8e8e8e" stroke-width="1.3"/><path d="M193.00 180.20 L193.00 195.20" stroke="#8e8e8e" stroke-width="1.3"/><path d="M275.75 180.20 L275.75 195.20" stroke="#8e8e8e" stroke-width="1.3"/><path d="M358.50 180.20 L358.50 195.20" stroke="#8e8e8e" stroke-width="1.3"/><path d="M441.25 180.20 L441.25 195.20" stroke="#8e8e8e" stroke-width="1.3"/><path d="M524.00 180.20 L524.00 195.20" stroke="#8e8e8e" stroke-width="1.3"/><path d="M606.75 180.20 L606.75 195.20" stroke="#8e8e8e" stroke-width="1.3"/><path d="M689.50 180.20 L689.50 195.20" stroke="#8e8e8e" stroke-width="1.3"/><path d="M275.80 193.90 L358.80 193.90" stroke="#2c6b55" stroke-width="1.0"/><path d="M5.00 195.15 L27.30 195.15" stroke="#9a9a9a" stroke-width="0.95"/><path d="M5.00 212.34 L27.30 212.34" stroke="#9a9a9a" stroke-width="0.95"/><path d="M5.00 229.53 L27.30 229.53" stroke="#9a9a9a" stroke-width="0.95"/><path d="M5.00 246.72 L27.30 246.72" stroke="#9a9a9a" stroke-width="0.95"/><path d="M5.00 263.91 L27.30 263.91" stroke="#9a9a9a" stroke-width="0.95"/><path d="M5.00 281.10 L27.30 281.10" stroke="#9a9a9a" stroke-width="0.95"/><path d="M5.00 298.29 L27.30 298.29" stroke="#9a9a9a" stroke-width="0.95"/><path d="M5.00 315.48 L27.30 315.48" stroke="#9a9a9a" stroke-width="0.95"/><path d="M5.00 332.67 L27.30 332.67" stroke="#9a9a9a" stroke-width="0.95"/><path d="M5.00 349.86 L27.30 349.86" stroke="#9a9a9a" stroke-width="0.95"/><path d="M5.00 367.05 L27.30 367.05" stroke="#9a9a9a" stroke-width="0.95"/><path d="M5.00 384.24 L27.30 384.24" stroke="#9a9a9a" stroke-width="0.95"/><path d="M5.00 401.43 L27.30 401.43" stroke="#9a9a9a" stroke-width="0.95"/><path d="M5.00 418.62 L27.30 418.62" stroke="#9a9a9a" stroke-width="0.95"/><path d="M5.00 435.81 L27.30 435.81" stroke="#9a9a9a" stroke-width="0.95"/><path d="M5.00 453.00 L27.30 453.00" stroke="#9a9a9a" stroke-width="0.95"/><path d="M26.90 315.48 L26.90 332.67" stroke="#1f8a4c" stroke-width="1.3"/></svg>
<span class="t" style="left:65.50px;top:184px;font-size:11.4px;line-height:11.4px;color:#f4f4f4;font-family:'Liberation Sans', sans-serif;font-weight:400;transform:scaleX(0.9400);">A</span>
<span class="t" style="left:148.25px;top:184px;font-size:11.4px;line-height:11.4px;color:#f4f4f4;font-family:'Liberation Sans', sans-serif;font-weight:400;transform:scaleX(0.9400);">B</span>
<span class="t" style="left:230.71px;top:184px;font-size:11.4px;line-height:11.4px;color:#f4f4f4;font-family:'Liberation Sans', sans-serif;font-weight:400;transform:scaleX(0.9400);">C</span>
<span class="t" style="left:313.46px;top:184px;font-size:11.4px;line-height:11.4px;color:#f4f4f4;font-family:'Liberation Sans', sans-serif;font-weight:400;transform:scaleX(0.9400);">D</span>
<span class="t" style="left:396.50px;top:184px;font-size:11.4px;line-height:11.4px;color:#f4f4f4;font-family:'Liberation Sans', sans-serif;font-weight:400;transform:scaleX(0.9400);">E</span>
<span class="t" style="left:479.55px;top:184px;font-size:11.4px;line-height:11.4px;color:#f4f4f4;font-family:'Liberation Sans', sans-serif;font-weight:400;transform:scaleX(0.9400);">F</span>
<span class="t" style="left:561.41px;top:184px;font-size:11.4px;line-height:11.4px;color:#f4f4f4;font-family:'Liberation Sans', sans-serif;font-weight:400;transform:scaleX(0.9400);">G</span>
<span class="t" style="left:644.46px;top:184px;font-size:11.4px;line-height:11.4px;color:#f4f4f4;font-family:'Liberation Sans', sans-serif;font-weight:400;transform:scaleX(0.9400);">H</span>
<svg class="b" style="left:14.60px;top:182.40px;" width="11" height="11" viewBox="0 0 11 11"><path d="M10.4 0.6 V10.4 H0.6 Z" fill="#e8e8e8"/></svg>
<span class="t" style="left:13.76px;top:200px;font-size:11.6px;line-height:11.6px;color:#f4f4f4;font-family:'Liberation Sans', sans-serif;font-weight:400;transform:scaleX(0.8800);">1</span>
<span class="t" style="left:13.76px;top:217px;font-size:11.6px;line-height:11.6px;color:#f4f4f4;font-family:'Liberation Sans', sans-serif;font-weight:400;transform:scaleX(0.8800);">2</span>
<span class="t" style="left:13.76px;top:234px;font-size:11.6px;line-height:11.6px;color:#f4f4f4;font-family:'Liberation Sans', sans-serif;font-weight:400;transform:scaleX(0.8800);">3</span>
<span class="t" style="left:13.76px;top:252px;font-size:11.6px;line-height:11.6px;color:#f4f4f4;font-family:'Liberation Sans', sans-serif;font-weight:400;transform:scaleX(0.8800);">4</span>
<span class="t" style="left:13.76px;top:269px;font-size:11.6px;line-height:11.6px;color:#f4f4f4;font-family:'Liberation Sans', sans-serif;font-weight:400;transform:scaleX(0.8800);">5</span>
<span class="t" style="left:13.76px;top:286px;font-size:11.6px;line-height:11.6px;color:#f4f4f4;font-family:'Liberation Sans', sans-serif;font-weight:400;transform:scaleX(0.8800);">6</span>
<span class="t" style="left:13.76px;top:303px;font-size:11.6px;line-height:11.6px;color:#f4f4f4;font-family:'Liberation Sans', sans-serif;font-weight:400;transform:scaleX(0.8800);">7</span>
<span class="t" style="left:13.76px;top:320px;font-size:11.6px;line-height:11.6px;color:#f4f4f4;font-family:'Liberation Sans', sans-serif;font-weight:400;transform:scaleX(0.8800);">8</span>
<span class="t" style="left:13.76px;top:337px;font-size:11.6px;line-height:11.6px;color:#f4f4f4;font-family:'Liberation Sans', sans-serif;font-weight:400;transform:scaleX(0.8800);">9</span>
<span class="t" style="left:10.92px;top:355px;font-size:11.6px;line-height:11.6px;color:#f4f4f4;font-family:'Liberation Sans', sans-serif;font-weight:400;transform:scaleX(0.8800);">10</span>
<span class="t" style="left:11.30px;top:372px;font-size:11.6px;line-height:11.6px;color:#f4f4f4;font-family:'Liberation Sans', sans-serif;font-weight:400;transform:scaleX(0.8800);">11</span>
<span class="t" style="left:10.92px;top:389px;font-size:11.6px;line-height:11.6px;color:#f4f4f4;font-family:'Liberation Sans', sans-serif;font-weight:400;transform:scaleX(0.8800);">12</span>
<span class="t" style="left:10.92px;top:406px;font-size:11.6px;line-height:11.6px;color:#f4f4f4;font-family:'Liberation Sans', sans-serif;font-weight:400;transform:scaleX(0.8800);">13</span>
<span class="t" style="left:10.92px;top:423px;font-size:11.6px;line-height:11.6px;color:#f4f4f4;font-family:'Liberation Sans', sans-serif;font-weight:400;transform:scaleX(0.8800);">14</span>
<span class="t" style="left:10.92px;top:441px;font-size:11.6px;line-height:11.6px;color:#f4f4f4;font-family:'Liberation Sans', sans-serif;font-weight:400;transform:scaleX(0.8800);">15</span>
<svg class="b" style="left:0;top:0" width="715" height="502" viewBox="0 0 715 502" fill="none"><path d="M110.25 195.15 L110.25 315.93" stroke="#262626" stroke-width="0.95"/><path d="M193.00 195.15 L193.00 315.93" stroke="#262626" stroke-width="0.95"/><path d="M275.75 195.15 L275.75 315.93" stroke="#262626" stroke-width="0.95"/><path d="M358.50 195.15 L358.50 315.93" stroke="#262626" stroke-width="0.95"/><path d="M109.80 212.34 L358.95 212.34" stroke="#262626" stroke-width="0.95"/><path d="M109.80 229.53 L358.95 229.53" stroke="#262626" stroke-width="0.95"/><path d="M109.80 246.72 L358.95 246.72" stroke="#262626" stroke-width="0.95"/><path d="M109.80 263.91 L358.95 263.91" stroke="#262626" stroke-width="0.95"/><path d="M109.80 281.10 L358.95 281.10" stroke="#262626" stroke-width="0.95"/><path d="M109.80 298.29 L358.95 298.29" stroke="#262626" stroke-width="0.95"/><path d="M109.80 315.48 L358.95 315.48" stroke="#262626" stroke-width="0.95"/></svg>
<span class="t" style="left:115.60px;top:198px;font-size:12.2px;line-height:12.2px;color:#000;font-family:'Liberation Serif', serif;font-weight:700;transform:scaleX(1.0320);">Original data</span>
<span class="t" style="left:196.40px;top:198px;font-size:12.2px;line-height:12.2px;color:#000;font-family:'Liberation Serif', serif;font-weight:700;transform:scaleX(1.0446);">Random data</span>
<span class="t" style="left:295.60px;top:198px;font-size:12.2px;line-height:12.2px;color:#000;font-family:'Liberation Serif', serif;font-weight:700;transform:scaleX(1.0237);">Number</span>
<span class="t" style="left:143.84px;top:216px;font-size:12.2px;line-height:12.2px;color:#000;font-family:'Liberation Serif', serif;font-weight:400;transform:scaleX(1.0000);">A1</span>
<span class="t" style="left:226.74px;top:216px;font-size:12.2px;line-height:12.2px;color:#000;font-family:'Liberation Serif', serif;font-weight:400;transform:scaleX(1.0000);">A1</span>
<span class="t" style="left:349.90px;top:216px;font-size:12.2px;line-height:12.2px;color:#000;font-family:'Liberation Serif', serif;font-weight:400;transform:scaleX(1.0000);">1</span>
<span class="t" style="left:143.84px;top:233px;font-size:12.2px;line-height:12.2px;color:#000;font-family:'Liberation Serif', serif;font-weight:400;transform:scaleX(1.0000);">A2</span>
<span class="t" style="left:226.74px;top:233px;font-size:12.2px;line-height:12.2px;color:#000;font-family:'Liberation Serif', serif;font-weight:400;transform:scaleX(1.0000);">A2</span>
<span class="t" style="left:349.90px;top:233px;font-size:12.2px;line-height:12.2px;color:#000;font-family:'Liberation Serif', serif;font-weight:400;transform:scaleX(1.0000);">2</span>
<span class="t" style="left:143.84px;top:250px;font-size:12.2px;line-height:12.2px;color:#000;font-family:'Liberation Serif', serif;font-weight:400;transform:scaleX(1.0000);">A3</span>
<span class="t" style="left:226.74px;top:250px;font-size:12.2px;line-height:12.2px;color:#000;font-family:'Liberation Serif', serif;font-weight:400;transform:scaleX(1.0000);">A3</span>
<span class="t" style="left:349.90px;top:250px;font-size:12.2px;line-height:12.2px;color:#000;font-family:'Liberation Serif', serif;font-weight:400;transform:scaleX(1.0000);">3</span>
<span class="t" style="left:144.18px;top:267px;font-size:12.2px;line-height:12.2px;color:#000;font-family:'Liberation Serif', serif;font-weight:400;transform:scaleX(1.0000);">B1</span>
<span class="t" style="left:227.08px;top:267px;font-size:12.2px;line-height:12.2px;color:#000;font-family:'Liberation Serif', serif;font-weight:400;transform:scaleX(1.0000);">B1</span>
<span class="t" style="left:349.90px;top:267px;font-size:12.2px;line-height:12.2px;color:#000;font-family:'Liberation Serif', serif;font-weight:400;transform:scaleX(1.0000);">4</span>
<span class="t" style="left:144.18px;top:284px;font-size:12.2px;line-height:12.2px;color:#000;font-family:'Liberation Serif', serif;font-weight:400;transform:scaleX(1.0000);">B2</span>
<span class="t" style="left:227.08px;top:284px;font-size:12.2px;line-height:12.2px;color:#000;font-family:'Liberation Serif', serif;font-weight:400;transform:scaleX(1.0000);">B2</span>
<span class="t" style="left:349.90px;top:284px;font-size:12.2px;line-height:12.2px;color:#000;font-family:'Liberation Serif', serif;font-weight:400;transform:scaleX(1.0000);">5</span>
<span class="t" style="left:144.18px;top:302px;font-size:12.2px;line-height:12.2px;color:#000;font-family:'Liberation Serif', serif;font-weight:400;transform:scaleX(1.0000);">C1</span>
<span class="t" style="left:227.08px;top:302px;font-size:12.2px;line-height:12.2px;color:#000;font-family:'Liberation Serif', serif;font-weight:400;transform:scaleX(1.0000);">C1</span>
<span class="t" style="left:349.90px;top:302px;font-size:12.2px;line-height:12.2px;color:#000;font-family:'Liberation Serif', serif;font-weight:400;transform:scaleX(1.0000);">6</span>
<svg class="b" style="left:0;top:0" width="715" height="502" viewBox="0 0 715 502" fill="none"><rect x="275.75" y="315.68" width="82.75" height="17.79" stroke="#1f7a48" stroke-width="1.5"/><rect x="356.60" y="331.37" width="3.6" height="3.6" fill="#1f7a48" stroke="#fff" stroke-width="0.5"/><rect x="96.35" y="195.8" width="335.1" height="127.95" stroke="#ea1c24" stroke-width="3.15"/></svg>
<div class="b" style="left:5.00px;top:457.60px;width:710.00px;height:26.40px;background:#2e2e2e;"></div>
<div class="b" style="left:698.00px;top:180.00px;width:17.00px;height:278.00px;background:#2e2e2e;"></div>
<svg class="b" style="left:698px;top:179px" width="17" height="283" viewBox="0 0 17 283"><rect x="1.00" y="1.50" width="14.40" height="280.00" rx="7.2" fill="#3d3d3d"/></svg>
<svg class="b" style="left:701.60px;top:183.60px;" width="9" height="6.6" viewBox="0 0 9 6.6"><path d="M0.8 6 L4.5 0.6 L8.2 6 Z" fill="#c8c8c8"/></svg>
<svg class="b" style="left:701px;top:193px" width="10" height="194" viewBox="0 0 10 194"><rect x="1.40" y="1.10" width="7.40" height="191.60" rx="3.7" fill="#bfbfbf"/></svg>
<svg class="b" style="left:701.60px;top:450.00px;" width="9" height="6.6" viewBox="0 0 9 6.6"><path d="M0.8 0.6 L4.5 6 L8.2 0.6 Z" fill="#c8c8c8"/></svg>
<svg class="b" style="left:26.40px;top:466.00px;" width="5" height="8.4" viewBox="0 0 5 8.4"><path d="M4.2 0.7 L0.9 4.2 L4.2 7.7" fill="none" stroke="#a9a9a9" stroke-width="1.1"/></svg>
<svg class="b" style="left:53.80px;top:466.00px;" width="5" height="8.4" viewBox="0 0 5 8.4"><path d="M0.8 0.7 L4.1 4.2 L0.8 7.7" fill="none" stroke="#a9a9a9" stroke-width="1.1"/></svg>
<span class="t" style="left:106.00px;top:466px;font-size:12.6px;line-height:12.6px;color:#f4f4f4;font-family:'Liberation Sans', sans-serif;font-weight:400;transform:scaleX(0.8664);">Sheet2</span>
<div class="b" style="left:151.00px;top:457.00px;width:56.00px;height:5.00px;background:#ffffff;"></div>
<div class="b" style="left:140.00px;top:457.60px;width:15.00px;height:12.40px;background:#2e2e2e;border-radius:0 4px 0 0;"></div>
<div class="b" style="left:202.80px;top:457.60px;width:15.20px;height:12.40px;background:#2e2e2e;border-radius:4px 0 0 0;"></div>
<div class="b" style="left:155.00px;top:456.50px;width:47.80px;height:23.90px;background:#ffffff;border-radius:0 0 4px 4px;"></div>
<span class="t" style="left:162.00px;top:463px;font-size:12.6px;line-height:12.6px;color:#333333;font-family:'Liberation Sans', sans-serif;font-weight:700;transform:scaleX(0.8156);">Sheet1</span>
<svg class="b" style="left:161px;top:475px" width="36" height="5" viewBox="0 0 36 5"><rect x="1.00" y="1.50" width="33.80" height="1.90" rx="0.8" fill="#1f8a4c"/></svg>
<svg class="b" style="left:149px;top:462px" width="4" height="18" viewBox="0 0 4 18"><rect x="1.60" y="1.00" width="1.00" height="15.60" rx="0" fill="#8a8a8a"/></svg>
<svg class="b" style="left:205px;top:462px" width="4" height="18" viewBox="0 0 4 18"><rect x="1.10" y="1.00" width="1.00" height="15.60" rx="0" fill="#8a8a8a"/></svg>
<svg class="b" style="left:241.00px;top:466.00px;" width="10" height="10" viewBox="0 0 10 10"><path d="M5 0.6 V9.4 M0.6 5 H9.4" stroke="#e8e8e8" stroke-width="1.1"/></svg>
<svg class="b" style="left:431px;top:465px" width="5" height="5" viewBox="0 0 5 5"><rect x="1.50" y="1.65" width="1.90" height="1.90" rx="0.5" fill="#e4e4e4"/></svg>
<svg class="b" style="left:431px;top:469px" width="5" height="5" viewBox="0 0 5 5"><rect x="1.50" y="1.25" width="1.90" height="1.90" rx="0.5" fill="#e4e4e4"/></svg>
<svg class="b" style="left:431px;top:472px" width="5" height="5" viewBox="0 0 5 5"><rect x="1.50" y="1.85" width="1.90" height="1.90" rx="0.5" fill="#e4e4e4"/></svg>
<svg class="b" style="left:446px;top:463px" width="255" height="16" viewBox="0 0 255 16"><rect x="1.00" y="1.40" width="252.20" height="13.10" rx="6.5" fill="#3d3d3d"/></svg>
<svg class="b" style="left:450.40px;top:467.00px;" width="6.6" height="8.4" viewBox="0 0 6.6 8.4"><path d="M5.9 0.6 L0.8 4.2 L5.9 7.8 Z" fill="#cfcfcf"/></svg>
<svg class="b" style="left:460px;top:466px" width="198" height="10" viewBox="0 0 198 10"><rect x="1.00" y="1.20" width="196.00" height="7.30" rx="3.6" fill="#bfbfbf"/></svg>
<svg class="b" style="left:689.00px;top:467.00px;" width="6.6" height="8.4" viewBox="0 0 6.6 8.4"><path d="M0.7 0.6 L5.8 4.2 L0.7 7.8 Z" fill="#cfcfcf"/></svg>
<div class="b" style="left:0.00px;top:484.00px;width:715.00px;height:18.00px;background:#393939;"></div>
<span class="t" style="left:6.60px;top:490px;font-size:9.3px;line-height:9.3px;color:#f2f2f2;font-family:'Liberation Sans', sans-serif;font-weight:400;transform:scaleX(0.8853);">Ready</span>
<span class="t" style="left:44.00px;top:490px;font-size:9.3px;line-height:9.3px;color:#f2f2f2;font-family:'Liberation Sans', sans-serif;font-weight:400;transform:scaleX(0.9291);">Sheet 2 of 2</span>
<span class="t" style="left:102.60px;top:490px;font-size:9.3px;line-height:9.3px;color:#f2f2f2;font-family:'Liberation Sans', sans-serif;font-weight:400;transform:scaleX(0.9326);">Workbook Statistics</span>
<svg class="b" style="left:194.60px;top:487.00px;" width="14" height="13" viewBox="0 0 14 13"><rect x="0.7" y="1.7" width="11" height="9.4" fill="none" stroke="#e4e4e4" stroke-width="1.1"/><rect x="0.7" y="1.7" width="11" height="2.2" fill="#d8d8d8"/>
<circle cx="8.8" cy="8.8" r="3.5" fill="#393939" stroke="#e8e8e8" stroke-width="1.15"/><circle cx="8.8" cy="8.8" r="1.45" fill="#f2f2f2"/></svg>
<svg class="b" style="left:221.40px;top:486.40px;" width="14" height="14" viewBox="0 0 14 14"><circle cx="5.2" cy="2.7" r="1.55" fill="none" stroke="#eaeaea" stroke-width="1"/>
<path d="M1 4.4 Q1.4 5.6 3.6 5.9 V8.6 L2.3 12.3 M9.6 4.4 Q9.2 5.6 6.9 5.9 V8.2 L7.6 9.6 M3.6 5.9 H6.9" fill="none" stroke="#eaeaea" stroke-width="1.15" stroke-linecap="round" stroke-linejoin="round"/>
<circle cx="4.3" cy="9.4" r="0.7" fill="#eaeaea"/>
<path d="M7.4 8.6 L12.4 12.9 M12.4 8.6 L7.4 12.9" stroke="#eaeaea" stroke-width="1.05" stroke-linecap="round"/></svg>
<span class="t" style="left:236.80px;top:490px;font-size:9.3px;line-height:9.3px;color:#f2f2f2;font-family:'Liberation Sans', sans-serif;font-weight:400;transform:scaleX(0.8989);">Accessibility: Investigate</span>
<div class="b" style="left:493.00px;top:484.60px;width:33.40px;height:17.40px;background:#4b4b4b;"></div>
<svg class="b" style="left:503.40px;top:486.60px;" width="13" height="13" viewBox="0 0 13 13"><rect x="0.3" y="0.3" width="11.9" height="11.9" rx="1.2" fill="#f4f4f4"/><rect x="1.50" y="1.50" width="2.3" height="2.3" fill="#3a3a3a"/><rect x="5.05" y="1.50" width="2.3" height="2.3" fill="#3a3a3a"/><rect x="8.60" y="1.50" width="2.3" height="2.3" fill="#3a3a3a"/><rect x="1.50" y="5.05" width="2.3" height="2.3" fill="#3a3a3a"/><rect x="5.05" y="5.05" width="2.3" height="2.3" fill="#3a3a3a"/><rect x="8.60" y="5.05" width="2.3" height="2.3" fill="#3a3a3a"/><rect x="1.50" y="8.60" width="2.3" height="2.3" fill="#3a3a3a"/><rect x="5.05" y="8.60" width="2.3" height="2.3" fill="#3a3a3a"/><rect x="8.60" y="8.60" width="2.3" height="2.3" fill="#3a3a3a"/></svg>
<svg class="b" style="left:536.60px;top:486.60px;" width="13" height="13" viewBox="0 0 13 13"><rect x="0.8" y="0.8" width="11.2" height="10.8" rx="0.8" fill="none" stroke="#ececec" stroke-width="1.35"/>
<rect x="4" y="3.2" width="4.8" height="6" fill="#6a6a6a" stroke="#c4c4c4" stroke-width="0.9"/><path d="M3 3 V9.4 M9.8 3 V9.4" stroke="#dcdcdc" stroke-width="0.8"/></svg>
<svg class="b" style="left:570.20px;top:486.60px;" width="13" height="13" viewBox="0 0 13 13"><rect x="0.8" y="0.8" width="10.8" height="10.8" rx="0.8" fill="none" stroke="#ececec" stroke-width="1.35"/>
<path d="M3.6 0.8 V6.8 H8.8 V0.8 M6.2 0.8 V6.4" fill="none" stroke="#ececec" stroke-width="1.2"/></svg>
<div class="b" style="left:597.00px;top:493.00px;width:6.60px;height:1.10px;background:#d8d8d8;"></div>
<div class="b" style="left:608.00px;top:493.10px;width:82.40px;height:0.90px;background:#a8a8a8;"></div>
<div class="b" style="left:647.60px;top:489.00px;width:3.80px;height:9.00px;background:#e2e2e2;border-radius:0.6px;"></div>
<div class="b" style="left:649.20px;top:489.60px;width:0.60px;height:7.80px;background:#9a9a9a;"></div>
<svg class="b" style="left:694.00px;top:490.00px;" width="7.4" height="7.4" viewBox="0 0 7.4 7.4"><path d="M3.7 0.4 V7 M0.4 3.7 H7 " stroke="#d8d8d8" stroke-width="1.05"/></svg>
<div class="b" style="left:714.00px;top:1.00px;width:1.00px;height:483.00px;background:#6c6c6c;"></div>
</div></body></html>
